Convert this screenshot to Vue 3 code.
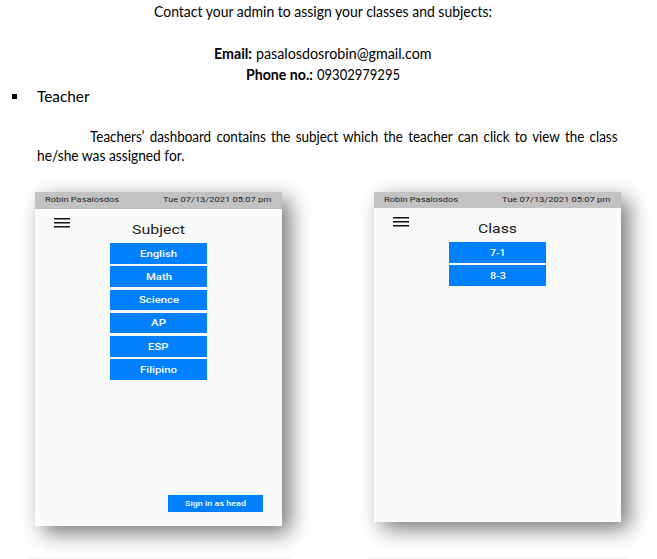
<script setup>
import { h } from 'vue'

// A single line of text set to an exact measure.
const Line = (props) =>
  h('svg', { class: 'line', width: props.w, height: props.s * 1.25, 'aria-label': props.t }, [
    h('text', { x: 0, y: props.s * 0.95, 'font-size': props.s, textLength: props.w, lengthAdjust: 'spacingAndGlyphs' }, props.t),
  ])
Line.props = ['t', 'w', 's']

const subjects = [
  ['English', 37], ['Math', 26], ['Science', 40], ['AP', 15], ['ESP', 20.5], ['Filipino', 37],
]
const classes = [['7-1', 15.5], ['8-3', 16]]
const screens = [
  { name: 'subject', title: 'Subject', width: 53, items: subjects, action: 'Sign in as head' },
  { name: 'class', title: 'Class', width: 39, items: classes },
]
</script>

<template>
  <main class="page">
    <section class="contact">
      <p class="row intro"><Line t="Contact your admin to assign your classes and subjects:" :w="338" :s="14.5" /></p>
      <p class="row email"><b><Line t="Email:" :w="38" :s="14.5" /></b><Line t="pasalosdosrobin@gmail.com" :w="175.5" :s="14.5" /></p>
      <p class="row phone"><b><Line t="Phone no.:" :w="67" :s="14.5" /></b><Line t="09302979295" :w="83" :s="14.5" /></p>
    </section>
    <div class="role"><i class="bullet"></i><Line t="Teacher" :w="52.5" :s="15" /></div>
    <section class="description">
      <p class="first"><Line t="Teachers’ dashboard contains the subject which the teacher can click to view the class" :w="527.5" :s="14.5" /></p>
      <p class="second"><Line t="he/she was assigned for." :w="147.5" :s="14.5" /></p>
    </section>
    <section class="screens">
      <article v-for="screen in screens" :key="screen.name" class="screen" :class="screen.name">
        <header class="status">
          <Line t="Robin Pasalosdos" :w="74" :s="7.6" />
          <Line t="Tue 07/13/2021 05:07 pm" :w="108.5" :s="7.6" />
        </header>
        <svg class="menu" width="16" height="10" viewBox="0 0 16 10">
          <path d="M0 .7h16M0 4.7h16M0 8.7h16" stroke="#111" stroke-width="1.5" />
        </svg>
        <h2 class="title"><Line :t="screen.title" :w="screen.width" :s="12.4" /></h2>
        <div class="list">
          <button v-for="item in screen.items" :key="item[0]" class="item"><Line :t="item[0]" :w="item[1]" :s="8.4" /></button>
        </div>
        <button v-if="screen.action" class="action"><Line :t="screen.action" :w="61" :s="6.6" /></button>
      </article>
    </section>
    <footer class="next"><i></i><i></i></footer>
  </main>
</template>

<style>
body { margin: 0; background: #fff; }
</style>

<style scoped>
.page {
  width: 657px;
  height: 559px;
  overflow: hidden;
  display: flex;
  flex-direction: column;
  background: #fff;
  color: #000;
  font-family: Lato, "Liberation Sans", sans-serif;
}
p, h2 { margin: 0; }
.page :deep(.line) { display: block; flex: none; overflow: visible; fill: currentColor; }
.contact { width: 646px; height: 87px; flex: none; }
.row { display: flex; justify-content: center; gap: 4px; }
.intro { height: 42px; padding-top: 2.8px; box-sizing: border-box; }
.email { height: 21px; padding-top: 2.8px; box-sizing: border-box; }
.phone { padding-top: 2.8px; }
.role { display: flex; flex: none; align-items: center; gap: 20px; height: 20px; padding-left: 12px; }
.bullet { width: 5px; height: 5px; margin-top: -1px; background: #000; }
.description { flex: none; height: 85px; }
.first { height: 19px; padding: 20.8px 0 0 90px; word-spacing: 2px; }
.second { padding-left: 37px; }
.screens { display: flex; flex: none; gap: 92px; align-items: flex-start; padding-left: 35px; height: 365px; }
.screen {
  width: 247px;
  height: 334px;
  display: flex;
  flex-direction: column;
  background: #fafafa;
  color: #222;
  box-shadow: 8px 7px 20px rgba(0, 0, 0, 0.53);
  font-family: Roboto, sans-serif;
}
.screen.class { height: 330px; }
.status {
  display: flex;
  flex: none;
  justify-content: space-between;
  box-sizing: border-box;
  height: 17px;
  padding: 3.1px 10.5px 0 10px;
  background: #c2c2c2;
}
.class .status { height: 16px; padding-top: 2.8px; }
.menu { display: block; flex: none; margin: 9px 0 0 19px; }
.title { display: flex; flex: none; justify-content: center; height: 16.9px; margin-top: -5.9px; padding-bottom: 4px; font-weight: 400; }
.list { display: flex; flex: none; flex-direction: column; align-items: center; gap: 2.8px; }
button { border: 0; padding: 1px 0 0; box-sizing: border-box; display: flex; align-items: center; justify-content: center; background: #0080ff; color: #fff; font-family: inherit; font-weight: 500; }
.item { width: 97px; height: 20.5px; flex: none; }
.action { width: 95px; height: 17px; flex: none; margin: auto 19px 14px auto; }
.next { display: flex; flex: none; gap: 77px; padding-left: 28px; }
.next i { width: 262px; height: 2px; background: #f7f7f7; }
</style>
